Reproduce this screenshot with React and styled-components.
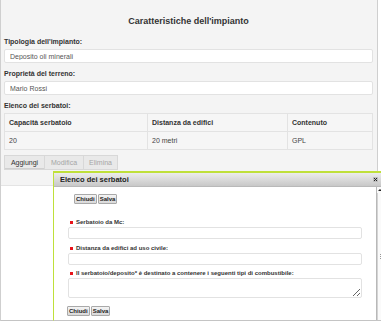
import React from 'react';
import styled, { createGlobalStyle } from 'styled-components';

const GlobalStyle = createGlobalStyle`
  html, body {
    margin: 0;
    padding: 0;
    background: #ffffff;
    overflow: hidden;
  }
  body {
    font-family: 'Liberation Sans', Arial, sans-serif;
    color: #333;
  }
  * {
    box-sizing: border-box;
  }
`;

const SWrapper = styled.div`
  position: relative;
  width: 378px;
  height: 321px;
  border-left: 1px solid #cfcfcf;
  border-right: 1px solid #cfcfcf;
  border-bottom: 1px solid #c4c4c4;
  background-color: #ffffff;
`;

const SPanel = styled.section`
  display: flex;
  flex-direction: column;
  padding: 15px 4px 9px 3px;
  background-color: #f4f4f4;
  border-bottom: 1px solid #e4e4e4;
`;

const STitle = styled.h2`
  margin: 0 0 10px;
  font-size: 9px;
  line-height: 12px;
  font-weight: bold;
  text-align: center;
  color: #333;
`;

const SField = styled.div`
  display: flex;
  flex-direction: column;
  gap: 2px;
  margin-bottom: 6px;
`;

const SLabel = styled.label`
  font-size: 7px;
  line-height: 10px;
  font-weight: bold;
  color: #333;
`;

const SInput = styled.input`
  width: 100%;
  height: 14px;
  padding: 0 5px;
  border: 1px solid #e2e2e2;
  border-radius: 2px;
  background: #ffffff;
  font-family: inherit;
  font-size: 7px;
  color: #555;
  outline: none;
`;

const STable = styled.table`
  width: 100%;
  border-collapse: collapse;
  background: #f6f6f6;
  font-size: 7px;
  color: #333;

  th,
  td {
    height: 18px;
    padding: 0 4px;
    border: 1px solid #e3e3e3;
    text-align: left;
  }

  th {
    font-weight: bold;
  }

  td {
    color: #444;
  }
`;

const SButtonGroup = styled.div`
  display: flex;
  margin-top: 3px;
`;

const SGroupButton = styled.button`
  height: 15px;
  width: ${({ $width }) => $width}px;
  padding: 0;
  border: 1px solid #d8d8d8;
  margin-right: -1px;
  background: #e9e9e9;
  font-family: inherit;
  font-size: 7px;
  color: ${({ disabled }) => (disabled ? '#a5a5a5' : '#333')};
  box-shadow: ${({ disabled }) => (disabled ? 'none' : 'inset 0 -1px 0 #d0d0d0')};
`;

const SDialog = styled.div`
  position: absolute;
  left: 52px;
  top: 171px;
  width: 329px;
  height: 150px;
  display: flex;
  flex-direction: column;
  border-top: 2px solid #bfe03a;
  border-left: 1px solid #bfe03a;
  border-bottom: 1px solid #c4c4c4;
  background: #ffffff;
`;

const STitleBar = styled.div`
  display: flex;
  justify-content: space-between;
  align-items: center;
  height: 14px;
  padding: 0 4px 0 6px;
  background: linear-gradient(#ececec, #c8c8c8);
  border-bottom: 1px solid #b9b9b9;
`;

const SDialogTitle = styled.span`
  font-size: 7.5px;
  font-weight: bold;
  color: #222;
`;

const SClose = styled.svg`
  width: 5px;
  height: 5px;
  display: block;
`;

const SDialogBody = styled.div`
  flex: 1;
  display: flex;
  min-height: 0;
`;

const SDialogContent = styled.div`
  flex: 1;
  display: flex;
  flex-direction: column;
  padding: 7px 14px 0 14px;
`;

const SScrollBar = styled.div`
  width: 6px;
  display: flex;
  flex-direction: column;
  border-left: 1px solid #b8b8b8;
  background: #fafafa;
`;

const SScrollArrow = styled.div`
  height: 6px;
  display: flex;
  align-items: center;
  justify-content: center;

  &::before {
    content: '';
    border-left: 2px solid transparent;
    border-right: 2px solid transparent;
    border-bottom: 2px solid #222;
  }
`;

const SScrollThumb = styled.div`
  flex: 1;
  display: flex;
  align-items: center;
  justify-content: center;
  border-left: 1px solid #d4d4d4;

  &::before {
    content: '';
    width: 1px;
    height: 5px;
    background: repeating-linear-gradient(#999 0 1px, transparent 1px 2px);
  }
`;

const SSmallButtons = styled.div`
  display: flex;
  gap: 1px;
  margin-left: ${({ $offset }) => $offset}px;
`;

const SSmallButton = styled.button`
  height: 10px;
  padding: 0 1px;
  border: 1px solid #a9a9a9;
  border-radius: 1px;
  background: linear-gradient(#f4f4f4, #d9d9d9);
  font-family: inherit;
  font-size: 6px;
  font-weight: bold;
  color: #222;
`;

const SDialogField = styled.div`
  display: flex;
  flex-direction: column;
  gap: 1px;
  margin-top: ${({ $top }) => $top}px;
`;

const SDialogLabel = styled.label`
  display: flex;
  align-items: center;
  gap: 3px;
  padding-left: 2px;
  font-size: 6px;
  line-height: 8px;
  font-weight: bold;
  color: #333;

  &::before {
    content: '';
    width: 3px;
    height: 3px;
    background: #e8141b;
  }
`;

const SDialogInput = styled.input`
  width: 100%;
  height: 12px;
  border: 1px solid #e2e2e2;
  border-radius: 2px;
  background: #ffffff;
  outline: none;
`;

const SDialogTextarea = styled.textarea`
  width: 100%;
  height: 20px;
  border: 1px solid #e2e2e2;
  border-radius: 2px;
  background: #ffffff;
  outline: none;
  padding: 0;
`;

const serbatoi = [{ capacita: '20', distanza: '20 metri', contenuto: 'GPL' }];

function App() {
  return (
    <>
      <GlobalStyle />
      <SWrapper>
        <SPanel>
          <STitle>Caratteristiche dell'impianto</STitle>
          <SField>
            <SLabel htmlFor="tipologia">Tipologia dell'impianto:</SLabel>
            <SInput id="tipologia" defaultValue="Deposito oli minerali" />
          </SField>
          <SField>
            <SLabel htmlFor="proprieta">Proprietà del terreno:</SLabel>
            <SInput id="proprieta" defaultValue="Mario Rossi" />
          </SField>
          <SField>
            <SLabel>Elenco dei serbatoi:</SLabel>
            <STable>
              <colgroup>
                <col style={{ width: 143 }} />
                <col style={{ width: 140 }} />
                <col />
              </colgroup>
              <thead>
                <tr>
                  <th>Capacità serbatoio</th>
                  <th>Distanza da edifici</th>
                  <th>Contenuto</th>
                </tr>
              </thead>
              <tbody>
                {serbatoi.map((s) => (
                  <tr key={s.capacita}>
                    <td>{s.capacita}</td>
                    <td>{s.distanza}</td>
                    <td>{s.contenuto}</td>
                  </tr>
                ))}
              </tbody>
            </STable>
            <SButtonGroup>
              <SGroupButton type="button" $width={41}>
                Aggiungi
              </SGroupButton>
              <SGroupButton type="button" $width={40} disabled>
                Modifica
              </SGroupButton>
              <SGroupButton type="button" $width={35} disabled>
                Elimina
              </SGroupButton>
            </SButtonGroup>
          </SField>
        </SPanel>

        <SDialog>
          <STitleBar>
            <SDialogTitle>Elenco dei serbatoi</SDialogTitle>
            <SClose viewBox="0 0 5 5">
              <rect x="0" y="0" width="5" height="5" fill="#bdbdbd" />
              <path d="M1 1 L4 4 M4 1 L1 4" stroke="#222" strokeWidth="1" />
            </SClose>
          </STitleBar>
          <SDialogBody>
            <SDialogContent>
              <SSmallButtons $offset={6}>
                <SSmallButton type="button">Chiudi</SSmallButton>
                <SSmallButton type="button">Salva</SSmallButton>
              </SSmallButtons>
              <SDialogField $top={14}>
                <SDialogLabel htmlFor="mc">Serbatoio da Mc:</SDialogLabel>
                <SDialogInput id="mc" />
              </SDialogField>
              <SDialogField $top={5}>
                <SDialogLabel htmlFor="distanza">
                  Distanza da edifici ad uso civile:
                </SDialogLabel>
                <SDialogInput id="distanza" />
              </SDialogField>
              <SDialogField $top={4}>
                <SDialogLabel htmlFor="combustibile">
                  Il serbatoio/deposito* è destinato a contenere i seguenti tipi di combustibile:
                </SDialogLabel>
                <SDialogTextarea id="combustibile" />
              </SDialogField>
              <SSmallButtons $offset={-1} style={{ marginTop: 8 }}>
                <SSmallButton type="button">Chiudi</SSmallButton>
                <SSmallButton type="button">Salva</SSmallButton>
              </SSmallButtons>
            </SDialogContent>
            <SScrollBar>
              <SScrollArrow />
              <SScrollThumb />
            </SScrollBar>
          </SDialogBody>
        </SDialog>
      </SWrapper>
    </>
  );
}

export default App;
